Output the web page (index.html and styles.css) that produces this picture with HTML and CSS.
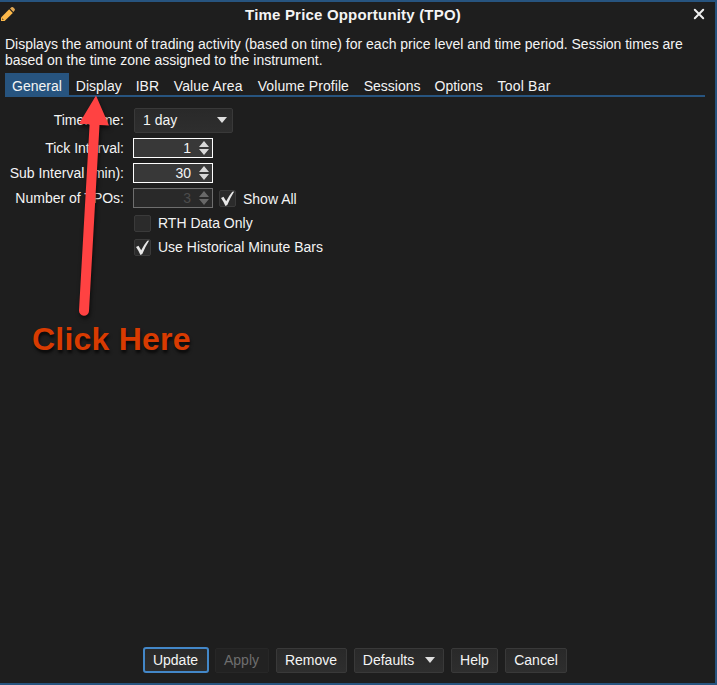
FILE: index.html
```html
<!DOCTYPE html>
<html lang="en">
<head>
<meta charset="utf-8">
<title>Time Price Opportunity (TPO)</title>
<link rel="stylesheet" href="styles.css">
</head>
<body>
<main class="dialog">
  <header class="titlebar">
    <svg class="pencil" width="16" height="18" viewBox="0 0 16 18"><path d="M1 18V14.500L9.200 6.300l3.600 3.600L4.600 18z" fill="#fdb94a"/><path d="M10 5.600l1.300-1.300q.9-.8 1.800 0l1.500 1.500q.8.9 0 1.700L13.400 8.900z" fill="#dfa653"/><path d="M2.200 15.200l1.600 1.600H2.200z" fill="#1e1e1e"/></svg>
    <h1>Time Price Opportunity (TPO)</h1>
    <svg class="close" width="12" height="12" viewBox="0 0 12 12"><path d="M1.800 1.800l8.400 8.400M10.200 1.800l-8.400 8.400" stroke="#efefef" stroke-width="2" stroke-linecap="round"/></svg>
  </header>
  <p class="description">Displays the amount of trading activity (based on time) for each price level and time period. Session times are<br>based on the time zone assigned to the instrument.</p>
  <nav class="tabs">
    <span class="tab active">General</span><span class="tab">Display</span><span class="tab ibr">IBR</span><span class="tab value">Value Area</span><span class="tab volume">Volume Profile</span><span class="tab">Sessions</span><span class="tab options">Options</span><span class="tab toolbar">Tool Bar</span>
  </nav>
  <section class="form">
    <label class="name">Timeframe:</label>
    <div class="field"><div class="button combo">1 day<i class="caret"></i></div></div>
    <label class="name">Tick Interval:</label>
    <div class="field"><div class="spinner">1<svg width="10" height="14" viewBox="0 0 10 14"><path d="M5 0l5 6H0zM0 8h10l-5 6z"/></svg></div></div>
    <label class="name">Sub Interval (min):</label>
    <div class="field"><div class="spinner">30<svg width="10" height="14" viewBox="0 0 10 14"><path d="M5 0l5 6H0zM0 8h10l-5 6z"/></svg></div></div>
    <label class="name">Number of TPOs:</label>
    <div class="field"><div class="spinner disabled">3<svg width="10" height="14" viewBox="0 0 10 14"><path d="M5 0l5 6H0zM0 8h10l-5 6z"/></svg></div>
      <div class="check inline"><span class="box"><svg width="17" height="17" viewBox="0 0 17 17"><path d="M2 8l2.500-1.200 2.700 4.400Q9.800 6 13.300 1.800l1.900-.3Q11.200 7.800 8.300 15l-1.900.9Q4.500 11.500 2 8z"/></svg></span>Show All</div></div>
    <div class="field wide"><div class="check"><span class="box"></span>RTH Data Only</div></div>
    <div class="field wide"><div class="check"><span class="box"><svg width="17" height="17" viewBox="0 0 17 17"><path d="M2 8l2.500-1.200 2.700 4.400Q9.800 6 13.300 1.800l1.900-.3Q11.200 7.800 8.300 15l-1.900.9Q4.500 11.500 2 8z"/></svg></span>Use Historical Minute Bars</div></div>
  </section>
  <footer class="actions">
    <div class="button update">Update</div>
    <div class="button apply">Apply</div>
    <div class="button remove">Remove</div>
    <div class="button defaults">Defaults<i class="caret"></i></div>
    <div class="button help">Help</div>
    <div class="button cancel">Cancel</div>
  </footer>
  <svg class="arrow" width="60" height="230" viewBox="70 90 60 230"><path d="M96 95.500l13 30-9.500-.6L89 311a5 5 0 0 1-10-.5L89.600 124.300 79 123.700z" fill="#ff4242"/></svg>
  <strong class="callout">Click Here</strong>
</main>
</body>
</html>
```

FILE: styles.css
```css
* { box-sizing: border-box; }
body {
  margin: 0;
  background: #1e1e1e;
  color: #f4f4f4;
  font: 14px/16px "Liberation Sans", Arial, sans-serif;
}
.dialog {
  position: relative;
  display: flex;
  flex-direction: column;
  width: 717px;
  height: 685px;
  overflow: hidden;
  border: solid #27547f;
  border-width: 2px 2px 2px 0;
}
.titlebar {
  display: grid;
  grid-template-columns: 16px 1fr 12px;
  align-items: start;
  height: 34px;
  padding: 4px 10px 0 0;
}
.titlebar h1 {
  margin: 0 0 0 -3px;
  font-size: 15px;
  line-height: 17px;
  letter-spacing: .19px;
  text-align: center;
}
.pencil { margin: -3px 0 0; }
.close { margin-top: 2px; fill: none; }
.description { margin: 0 0 5px; padding-left: 5px; white-space: nowrap; }
.tabs {
  display: flex;
  height: 24px;
  margin: 0 10px 0 5px;
  border-bottom: 2px solid #27547f;
}
.tab { height: 24px; padding: 5px 7px 0; white-space: nowrap; }
.active { background: #27547f; }
.ibr { width: 38px; }
.value { width: 84px; letter-spacing: .15px; }
.volume { width: 106px; letter-spacing: .07px; }
.options { width: 63px; }
.toolbar { letter-spacing: .2px; }
.form {
  display: grid;
  grid-template-columns: 124px 1fr;
  grid-template-rows: 30px 25px 25px 25px 25px 23px;
  column-gap: 9px;
  align-items: center;
  margin-top: 8px;
}
.name { text-align: right; white-space: nowrap; }
.field { display: flex; align-items: center; }
.wide { grid-column: 2; padding-top: 1px; }
.button {
  display: flex;
  align-items: center;
  justify-content: center;
  height: 25px;
  border: 1px solid #393939;
  border-radius: 2px;
  background: linear-gradient(#292929, #2e2e2e);
}
.combo { width: 99px; margin-left: 1px; padding: 0 5px 0 8px; justify-content: space-between; }
.caret {
  border: 5px solid transparent;
  border-top: 6px solid #dedede;
  border-bottom: 0;
}
.spinner {
  display: flex;
  align-items: center;
  justify-content: flex-end;
  gap: 8px;
  width: 80px;
  height: 20px;
  padding-right: 3px;
  border: 1px solid #fff;
  background: #383838;
}
.spinner svg { fill: #d8d8d8; }
.spinner.disabled { color: #4c4c4c; border-color: #6e6e6e; background: #292929; }
.disabled svg { fill: #686868; }
.check { display: flex; align-items: center; gap: 7px; margin-left: 1px; }
.inline { margin: 2px 0 0 6px; }
.box {
  width: 17px;
  height: 17px;
  border: 1px solid #3a3a3a;
  border-radius: 2px;
  background: #2b2b2b;
}
.box svg { display: block; margin: -1px; fill: #e8e8e8; }
.actions {
  display: flex;
  align-items: center;
  gap: 7px;
  margin: auto 0 10px 143px;
  height: 26px;
}
.update { width: 66px; height: 26px; padding-right: 1px; border: 2px solid #4387c8; border-radius: 3px; margin-right: -1px; }
.apply { width: 54px; padding-right: 1px; color: #6e6e6e; border-color: #272727; background: #222; }
.remove { width: 71px; padding-right: 1px; }
.defaults { width: 90px; gap: 11px; }
.help { width: 47px; }
.cancel { width: 62px; }
.arrow {
  position: absolute;
  left: 70px;
  top: 88px;
  filter: drop-shadow(1px 3px 2px rgba(0, 0, 0, .6));
}
.callout {
  position: absolute;
  left: 32px;
  top: 318px;
  font-size: 32px;
  line-height: 38px;
  letter-spacing: .22px;
  white-space: nowrap;
  color: #d83b01;
  text-shadow: 1px 3px 3px rgba(0, 0, 0, .7);
}
```
